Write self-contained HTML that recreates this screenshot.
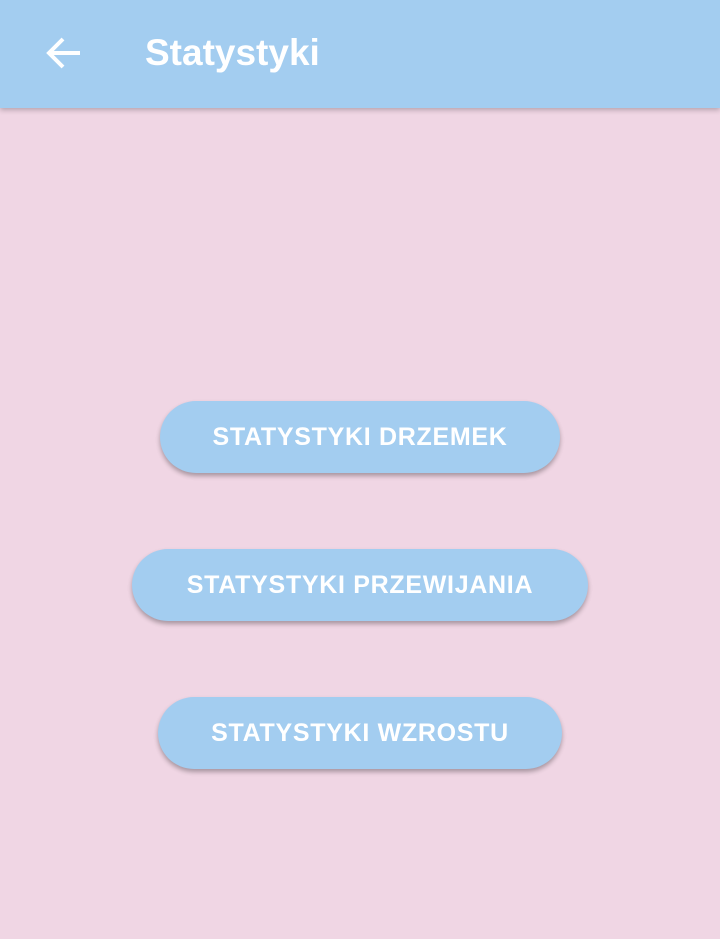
<!DOCTYPE html>
<html><head><style>
html,body{margin:0;padding:0;width:720px;height:939px;overflow:hidden;background:#f0d6e4;font-family:"Liberation Sans",sans-serif;}
.bar{position:absolute;left:0;top:0;width:720px;height:108px;background:#a3cdf0;box-shadow:0 2px 5px rgba(0,0,0,0.25);}
.title{position:absolute;left:145px;top:30px;font-size:37px;font-weight:bold;color:#fff;line-height:46px;letter-spacing:0px;}
.back{position:absolute;left:46px;top:36px;}
.btn{position:absolute;height:72px;border-radius:36px;background:#a3cdf0;color:#fff;font-size:25px;font-weight:bold;display:flex;align-items:center;justify-content:center;box-shadow:0 3px 5px rgba(0,0,0,0.3);letter-spacing:0.7px;}
</style></head><body>
<div class="bar">
<svg class="back" width="36" height="34" viewBox="0 0 36 34"><path d="M34 17H4M17 3L3 17l14 14" stroke="#fff" stroke-width="4" fill="none"/></svg>
<div class="title">Statystyki</div>
</div>
<div class="btn" style="left:160px;top:401px;width:400px">STATYSTYKI DRZEMEK</div>
<div class="btn" style="left:132px;top:549px;width:456px">STATYSTYKI PRZEWIJANIA</div>
<div class="btn" style="left:158px;top:697px;width:404px">STATYSTYKI WZROSTU</div>
</body></html>
